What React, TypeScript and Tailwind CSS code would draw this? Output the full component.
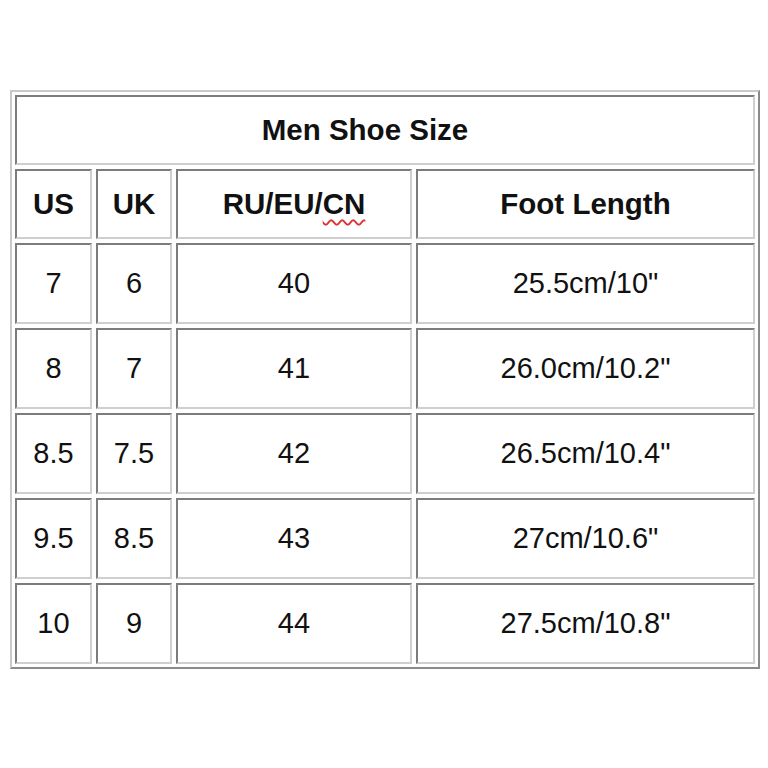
const rows = [
  ["7", "6", "40", "25.5cm/10\""],
  ["8", "7", "41", "26.0cm/10.2\""],
  ["8.5", "7.5", "42", "26.5cm/10.4\""],
  ["9.5", "8.5", "43", "27cm/10.6\""],
  ["10", "9", "44", "27.5cm/10.8\""],
];

const cell =
  "flex items-center justify-center border-2 border-t-[#7c7c7c] border-l-[#7c7c7c] border-b-[#cfcfcf] border-r-[#cfcfcf] bg-white";

export default function App() {
  return (
    <div className="w-[768px] h-[768px] bg-white pt-[90px] pl-[10px] font-['Liberation_Sans',Arial,sans-serif] text-[#111]">
      <div className="w-[750px] border-2 border-t-[#c9c9c9] border-l-[#c9c9c9] border-b-[#8a8a8a] border-r-[#8a8a8a] p-[3px]">
        <div className="grid grid-cols-[77px_76px_236px_339px] grid-rows-[70px_70px_81px_81px_81px_81px_81px] gap-[4px]">
          <div className={`${cell} col-span-4 pr-[40px] text-[29.5px] font-bold`}>Men Shoe Size</div>
          <div className={`${cell} text-[29.5px] font-bold`}>US</div>
          <div className={`${cell} text-[29.5px] font-bold`}>UK</div>
          <div className={`${cell} text-[29.5px] font-bold`}>
            RU/EU/<span className="underline decoration-wavy decoration-[#e03030] decoration-[1.5px] underline-offset-[5px]">CN</span>
          </div>
          <div className={`${cell} text-[29.5px] font-bold`}>Foot Length</div>
          {rows.map((r) =>
            r.map((v, i) => (
              <div key={r[0] + i} className={`${cell} text-[29px]`}>
                {v}
              </div>
            ))
          )}
        </div>
      </div>
    </div>
  );
}
